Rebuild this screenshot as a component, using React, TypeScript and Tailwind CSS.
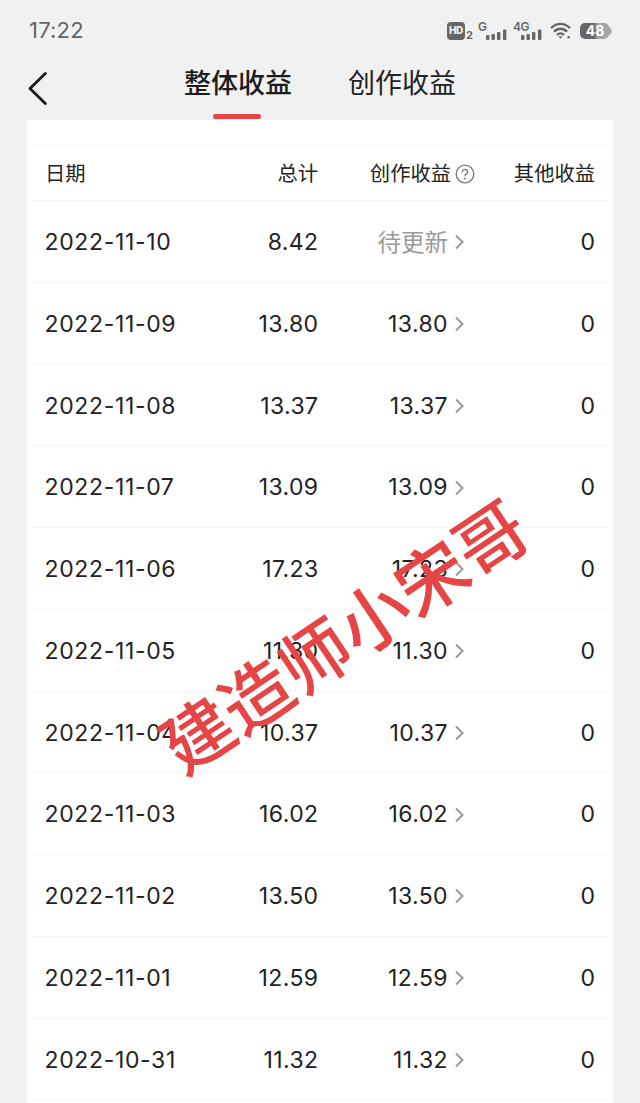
import React from "react";

interface Income {
  date: string;
  total: string;
  creation: string | null;
  other: string;
}

const incomes: Income[] = [
  { date: "2022-11-10", total: "8.42", creation: null, other: "0" },
  { date: "2022-11-09", total: "13.80", creation: "13.80", other: "0" },
  { date: "2022-11-08", total: "13.37", creation: "13.37", other: "0" },
  { date: "2022-11-07", total: "13.09", creation: "13.09", other: "0" },
  { date: "2022-11-06", total: "17.23", creation: "17.23", other: "0" },
  { date: "2022-11-05", total: "11.30", creation: "11.30", other: "0" },
  { date: "2022-11-04", total: "10.37", creation: "10.37", other: "0" },
  { date: "2022-11-03", total: "16.02", creation: "16.02", other: "0" },
  { date: "2022-11-02", total: "13.50", creation: "13.50", other: "0" },
  { date: "2022-11-01", total: "12.59", creation: "12.59", other: "0" },
  { date: "2022-10-31", total: "11.32", creation: "11.32", other: "0" },
];

const SignalBars = () => (
  <svg width="21" height="11" viewBox="0 0 21 11" fill="currentColor" className="mb-px self-end">
    <rect x="0" y="6" width="3.400" height="5" rx="1" />
    <rect x="5.500" y="5" width="3.400" height="6" rx="1" />
    <rect x="11" y="3" width="3.400" height="8" rx="1" />
    <rect x="17" y="0.500" width="3.400" height="10.500" rx="1" />
  </svg>
);

const StatusBar = () => (
  <div className="flex h-[61px] items-center pl-[29px] pr-[28px] text-[#666666]">
    <span className="flex-1 text-[22px] tracking-[0.200px]">17:22</span>
    <div className="flex h-5 items-end">
      <span className="mb-px flex h-[18px] w-[18px] items-center justify-center rounded-[4px] bg-[#666666] text-[10px] font-extrabold tracking-[-0.300px] text-[#f1f1f1]">
        HD
      </span>
      <span className="mb-px ml-px w-[7px] text-[11px] leading-[9px] font-bold">2</span>
    </div>
    <div className="ml-[5px] flex h-5">
      <span className="w-2 text-[12px] leading-[11px] font-semibold">G</span>
      <SignalBars />
    </div>
    <div className="ml-[6px] flex h-5">
      <span className="w-2 text-[12px] leading-[11px] font-semibold tracking-[-0.500px]">4G</span>
      <SignalBars />
    </div>
    <svg width="22" height="18" viewBox="0 0 22 18" fill="none" stroke="currentColor" strokeWidth="2.400" className="ml-2">
      <path d="M1 6.200C6.500 .4 14.500 .4 20 6.200" />
      <path d="M4 9.700c3.800-3.900 9.200-3.900 13 0" />
      <path d="M7 13c2-2 5-2 7 0" />
      <path d="M8.300 14.300L10.500 16.800l2.200-2.500z" fill="currentColor" stroke="none" />
      <circle cx="18.700" cy="15.200" r="1.300" fill="currentColor" stroke="none" />
    </svg>
    <div className="ml-2 flex items-center">
      <span className="flex h-4 w-[29px] items-center justify-center rounded-[5px] bg-linear-to-r from-[#666666] from-48% to-[#a5a5a5] to-60% pl-px text-[14px] font-bold text-white">
        48
      </span>
      <svg width="3" height="10" viewBox="0 0 3 10" fill="#a5a5a5">
        <path d="M0 0l2.500 3.500v3L0 10z" />
      </svg>
    </div>
  </div>
);

const NavBar = () => (
  <div className="flex h-[59px] items-start pl-7">
    <svg width="20" height="34" viewBox="0 0 20 34" fill="none" stroke="#1c1c1c" strokeWidth="2.800" strokeLinecap="round" strokeLinejoin="round" className="mt-[10px]">
      <path d="M17.300 2.500L2 17.500L17.300 32.500" />
    </svg>
    <div className="ml-[136px] flex flex-col items-center">
      <span className="h-[53px] text-[27px] leading-[46px] font-medium text-[#1c1c1c]">
        整体收益
      </span>
      <span className="mr-[2px] h-[5px] w-12 rounded-full bg-[#e64545]" />
    </div>
    <span className="ml-14 text-[27px] leading-[46px] text-[#222222]">
      创作收益
    </span>
  </div>
);

const HelpIcon = () => (
  <svg width="20" height="20" viewBox="0 0 20 20" fill="none" stroke="#777777" strokeWidth="1.300" className="ml-1">
    <circle cx="10" cy="10" r="8.800" />
    <path d="M7.300 8.200c0-3.700 5.400-3.700 5.400 0 0 2-2.700 1.900-2.700 4" />
    <circle cx="10" cy="14.500" r="1" fill="#777777" stroke="none" />
  </svg>
);

const Arrow = () => (
  <svg width="9" height="16" viewBox="0 0 9 16" fill="none" stroke="#999999" strokeWidth="2" className="ml-[7px]">
    <path d="M1 1.500L7.500 8L1 14.500" />
  </svg>
);

const IncomeTable = () => (
  <div className="mx-[27px] flex-1 bg-white text-[#222222]">
    <div className="h-[25px]" />
    <div className="flex h-[56px] items-center border-y border-[#f7f7f7] px-[18px] pt-[2px] text-[20.300px]">
      <span className="w-[132px]">日期</span>
      <span className="w-[141px] text-right">总计</span>
      <span className="flex w-[157px] items-center justify-end">
        创作收益
        <HelpIcon />
      </span>
      <span className="flex-1 text-right">其他收益</span>
    </div>
    {incomes.map((income) => (
      <div
        key={income.date}
        className="flex h-[81.750px] items-center border-b border-[#f7f7f7] pt-[2px] pr-[18px] pl-[17.500px] text-[23px]"
      >
        <span className="w-[133px] tracking-[0.650px] whitespace-nowrap">
          {income.date}
        </span>
        <span className="w-[141px] text-right tracking-[0.400px]">
          {income.total}
        </span>
        <span className="flex w-[157px] items-center justify-end pr-[11.500px] tracking-[0.400px]">
          {income.creation ?? (
            <span className="text-[23.500px] tracking-normal text-[#999999]">
              待更新
            </span>
          )}
          <Arrow />
        </span>
        <span className="flex-1 text-right">{income.other}</span>
      </div>
    ))}
  </div>
);

export default function App() {
  return (
    <div className="relative flex h-[1103px] w-[640px] flex-col overflow-hidden bg-[#f1f1f1] font-['Inter','Noto_Sans_CJK_SC',sans-serif]">
      <StatusBar />
      <NavBar />
      <IncomeTable />
      <div className="absolute top-[588px] left-[125px] w-[440px] rotate-[-33.800deg] text-center text-[70.500px] leading-[100px] font-medium whitespace-nowrap text-[#e64545]">
        建造师小宋哥
      </div>
    </div>
  );
}
